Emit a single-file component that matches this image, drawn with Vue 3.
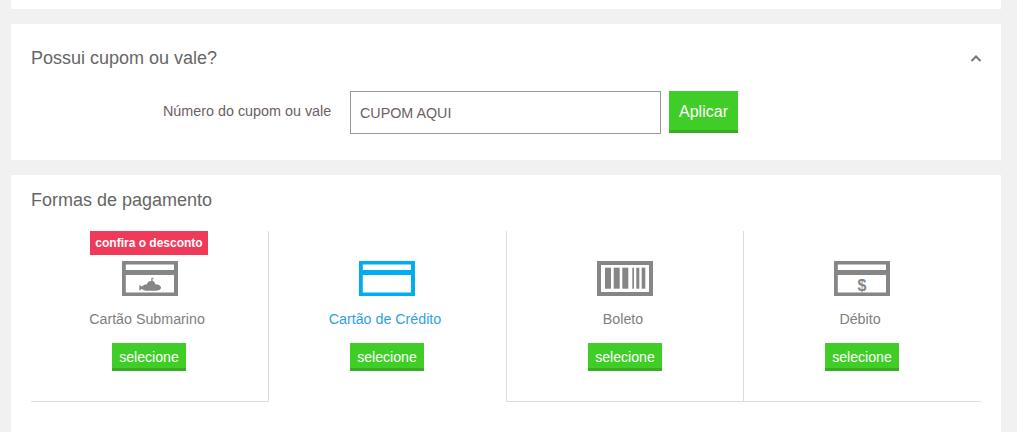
<script setup>
const methods = [
  { id: 'sub', label: 'Cartão Submarino', badge: 'confira o desconto' },
  { id: 'credit', label: 'Cartão de Crédito', active: true },
  { id: 'boleto', label: 'Boleto' },
  { id: 'debit', label: 'Débito' }
]
const bars = [
  [8, 6], [16.7, 6], [25.3, 6], [35.3, 1.7], [39.3, 3], [44.7, 3.6]
]
</script>

<template>
  <div class="page">
    <div class="card top-card"></div>

    <section class="card coupon">
      <div class="coupon-head">
        <h2 class="title">Possui cupom ou vale?</h2>
        <svg class="chevron" width="12" height="7" viewBox="0 0 12 7" aria-hidden="true">
          <path d="M1.5 6 L6 1.5 L10.5 6" fill="none" stroke="#777" stroke-width="2" />
        </svg>
      </div>
      <form class="coupon-form" @submit.prevent>
        <label class="coupon-label" for="cupom">Número do cupom ou vale</label>
        <input id="cupom" class="coupon-input" type="text" value="CUPOM AQUI" />
        <button class="btn btn-apply" type="submit">Aplicar</button>
      </form>
    </section>

    <section class="card payment">
      <h2 class="title payment-title">Formas de pagamento</h2>
      <div class="methods">
        <div v-for="m in methods" :key="m.id" class="method" :class="'method-' + m.id">
          <span v-if="m.badge" class="badge">{{ m.badge }}</span>
          <svg class="icon" width="56" height="35" viewBox="0 0 56 35" aria-hidden="true">
            <template v-if="m.id === 'boleto'">
              <rect x="2" y="2" width="52" height="31" fill="none" stroke="#868686" stroke-width="4" />
              <rect v-for="(b, i) in bars" :key="i" :x="b[0]" y="6.7" :width="b[1]" height="21" fill="#868686" />
            </template>
            <template v-else>
              <g :fill="m.active ? '#00aeef' : '#868686'">
                <path fill-rule="evenodd" d="M0 0H56V35H0Z M3.8 3.6V9H52V3.6Z M3.8 14V31.6H52V14Z" />
              </g>
              <path
                v-if="m.id === 'sub'"
                fill="#868686"
                d="M17.3 24 L20 25.5 C21.5 24 23 23.5 25 23.3 C25.5 21 27 20 29.3 20 L29.3 17 L31.5 16.7 L31.5 17.8 L30.6 17.8 L30.6 20 C32 20 33 21.5 33.3 23.3 C36.5 23.5 39 24.6 39 26.5 C39 28.6 36.5 29.8 33 29.8 L25 29.8 C23 29.8 21.3 29.2 20 28 L17.3 29.5 Z"
              />
              <text v-if="m.id === 'debit'" x="28" y="30" class="dollar" text-anchor="middle" fill="#868686">$</text>
            </template>
          </svg>
          <span class="method-label" :class="{ active: m.active }">{{ m.label }}</span>
          <button class="btn btn-select" type="button">selecione</button>
        </div>
      </div>
    </section>
  </div>
</template>

<style>
html, body {
  margin: 0;
  overflow: hidden;
  background: #f1f1f1;
}
</style>

<style scoped>
.page {
  height: 432px;
  overflow: hidden;
  box-sizing: border-box;
  padding: 0 16px 0 11px;
  display: flex;
  flex-direction: column;
  gap: 15px;
  background: #f1f1f1;
  font-family: "Liberation Sans", Arial, sans-serif;
  color: #666;
}
.card {
  background: #fff;
  flex: none;
}
.top-card {
  height: 9px;
}
.coupon {
  height: 136px;
  box-sizing: border-box;
  padding: 23px 19px 0 20px;
}
.coupon-head {
  display: flex;
  align-items: center;
  justify-content: space-between;
  height: 21px;
}
.chevron {
  display: block;
  margin-top: 1px;
}
.title {
  margin: 1px 0 -1px;
  font-size: 18px;
  line-height: 21px;
  font-weight: 400;
  color: #666;
}
.coupon-form {
  display: flex;
  align-items: flex-start;
  margin-top: 23px;
  padding-left: 132px;
}
.coupon-label {
  font-size: 14.35px;
  line-height: 40px;
  color: #6e6161;
  width: 200px;
  flex: none;
}
.coupon-input {
  box-sizing: border-box;
  width: 311px;
  height: 43px;
  margin-left: -13px;
  padding: 0 9px;
  border: 1px solid #999;
  border-radius: 0;
  outline: none;
  background: #fff;
  font: 14.3px "Liberation Sans", Arial, sans-serif;
  color: #6e6161;
}
.btn {
  box-sizing: border-box;
  display: block;
  border: 0;
  border-bottom: 3px solid #37ad22;
  border-radius: 0;
  padding: 2px 0 0;
  background: #40cd28;
  color: #fff;
  font-family: "Liberation Sans", Arial, sans-serif;
}
.btn-apply {
  width: 69px;
  height: 42px;
  margin-left: 8px;
  font-size: 16px;
}
.payment {
  flex: 1 0 auto;
  box-sizing: border-box;
  padding: 14px 20px 0;
}
.methods {
  display: flex;
  margin-top: 21px;
  width: 950px;
}
.method {
  position: relative;
  box-sizing: border-box;
  height: 171px;
  padding-top: 30px;
  display: flex;
  flex-direction: column;
  align-items: center;
}
.method-sub {
  width: 238px;
  border-right: 1px solid #ddd;
  border-bottom: 1px solid #ddd;
  padding-right: 1px;
}
.method-sub .icon {
  margin-left: 1px;
}
.method-credit {
  width: 237px;
  padding-right: 1px;
}
.method-boleto {
  width: 237px;
  border-left: 1px solid #ddd;
  border-bottom: 1px solid #ddd;
}
.method-debit {
  width: 238px;
  border-left: 1px solid #ddd;
  border-bottom: 1px solid #ddd;
  padding-right: 1px;
}
.badge {
  position: absolute;
  top: 0;
  left: 59px;
  width: 118px;
  height: 24px;
  background: #f03a5a;
  color: #fff;
  font-size: 12px;
  font-weight: 700;
  line-height: 24px;
  text-align: center;
}
.icon {
  display: block;
  flex: none;
}
.dollar {
  font-family: "Liberation Sans", Arial, sans-serif;
  font-size: 16px;
  font-weight: 700;
}
.method-label {
  margin-top: 15px;
  margin-right: 4px;
  font-size: 14.25px;
  line-height: 16px;
  color: #808080;
}
.method-label.active {
  color: #2f9fe8;
}
.btn-select {
  width: 74px;
  height: 28px;
  margin-top: 16px;
  font-size: 14.1px;
}
</style>
